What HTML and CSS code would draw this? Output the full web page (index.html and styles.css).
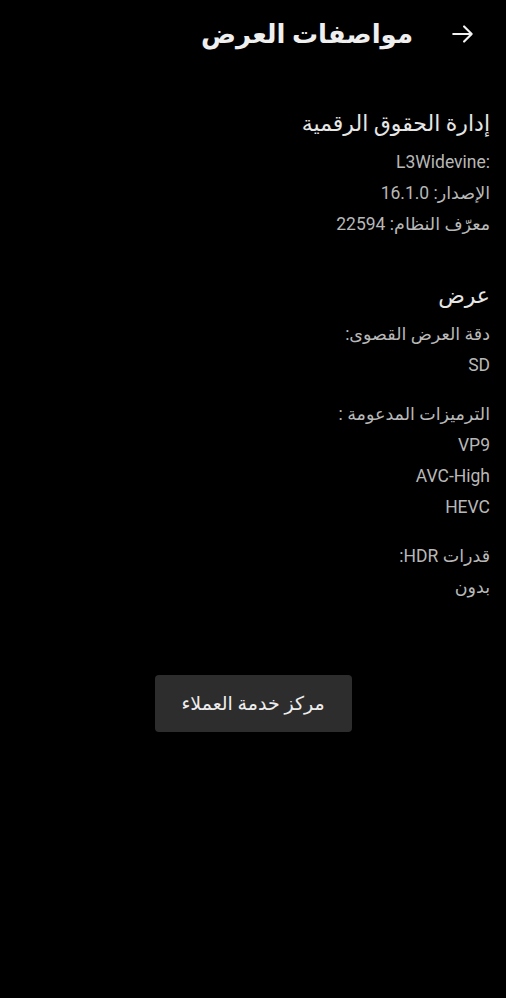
FILE: index.html
```html
<!DOCTYPE html>
<html lang="ar" dir="rtl">
<head>
<meta charset="utf-8">
<link rel="stylesheet" href="styles.css">
</head>
<body>
<header class="topbar">
  <span class="back">
    <svg width="26" height="26" viewBox="0 0 24 24"><path d="M3 12h17M13 5l7 7-7 7" fill="none" stroke="#f2f2f2" stroke-width="2" stroke-linecap="round" stroke-linejoin="round"/></svg>
  </span>
  <h1 class="title">مواصفات العرض</h1>
</header>
<main class="content">
  <section class="section">
    <h2 class="heading">إدارة الحقوق الرقمية</h2>
    <div class="group">
      <p class="line"><span class="ltr">L3Widevine:</span></p>
      <p class="line">الإصدار: 16.1.0</p>
      <p class="line">معرّف النظام: 22594</p>
    </div>
  </section>
  <section class="section">
    <h2 class="heading">عرض</h2>
    <div class="group">
      <p class="line">دقة العرض القصوى:</p>
      <p class="line">SD</p>
    </div>
    <div class="group">
      <p class="line">الترميزات المدعومة :</p>
      <p class="line">VP9</p>
      <p class="line">AVC-High</p>
      <p class="line">HEVC</p>
    </div>
    <div class="group">
      <p class="line">قدرات HDR:</p>
      <p class="line">بدون</p>
    </div>
  </section>
  <div class="actions">
    <button class="help">مركز خدمة العملاء</button>
  </div>
</main>
</body>
</html>
```
FILE: styles.css
```css
html, body {
  margin: 0;
  padding: 0;
  background: #000;
}
body {
  direction: rtl;
  font-family: Roboto, "DejaVu Sans", sans-serif;
  color: #b8b8b8;
  width: 506px;
  min-height: 998px;
}
.topbar {
  height: 68px;
  display: flex;
  align-items: center;
  padding-right: 30px;
  gap: 37px;
}
.back {
  display: flex;
  align-items: center;
}
.title {
  margin: 0;
  font-size: 26px;
  font-weight: bold;
  color: #efefef;
}
.content {
  padding: 40px 16px 0 16px;
}
.section + .section {
  margin-top: 40px;
}
.heading {
  margin: 0 0 7px 0;
  font-size: 22px;
  font-weight: normal;
  line-height: 32px;
  color: #e6e6e6;
}
.group + .group {
  margin-top: 18px;
}
.line {
  margin: 0;
  font-size: 17.5px;
  line-height: 31px;
}
.ltr {
  direction: ltr;
  unicode-bidi: isolate;
}
.actions {
  display: flex;
  justify-content: center;
  margin-top: 72px;
}
.help {
  width: 197px;
  height: 57px;
  background: #2d2d2d;
  border: none;
  border-radius: 4px;
  color: #ededed;
  font-family: Roboto, "DejaVu Sans", sans-serif;
  font-size: 19px;
  direction: rtl;
}
```
